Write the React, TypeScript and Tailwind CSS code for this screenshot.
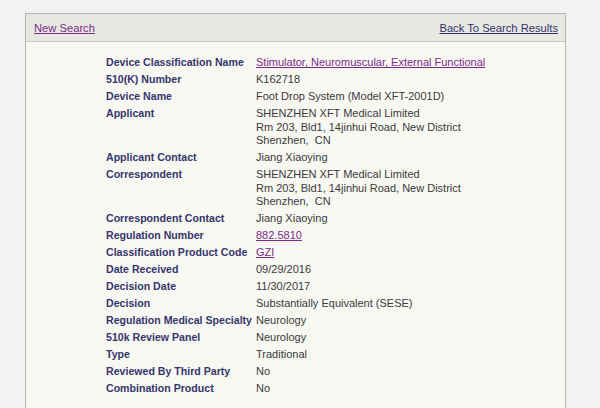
export default function App() {
    const rows: { label: string; value: string[]; link?: boolean }[] = [
        { label: 'Device Classification Name', value: ['Stimulator, Neuromuscular, External Functional'], link: true },
        { label: '510(K) Number', value: ['K162718'] },
        { label: 'Device Name', value: ['Foot Drop System (Model XFT-2001D)'] },
        { label: 'Applicant', value: ['SHENZHEN XFT Medical Limited', 'Rm 203, Bld1, 14jinhui Road, New District', 'Shenzhen,  CN'] },
        { label: 'Applicant Contact', value: ['Jiang Xiaoying'] },
        { label: 'Correspondent', value: ['SHENZHEN XFT Medical Limited', 'Rm 203, Bld1, 14jinhui Road, New District', 'Shenzhen,  CN'] },
        { label: 'Correspondent Contact', value: ['Jiang Xiaoying'] },
        { label: 'Regulation Number', value: ['882.5810'], link: true },
        { label: 'Classification Product Code', value: ['GZI'], link: true },
        { label: 'Date Received', value: ['09/29/2016'] },
        { label: 'Decision Date', value: ['11/30/2017'] },
        { label: 'Decision', value: ['Substantially Equivalent (SESE)'] },
        { label: 'Regulation Medical Specialty', value: ['Neurology'] },
        { label: '510k Review Panel', value: ['Neurology'] },
        { label: 'Type', value: ['Traditional'] },
        { label: 'Reviewed By Third Party', value: ['No'] },
        { label: 'Combination Product', value: ['No'] },
    ]

    return (
        <div className="w-[600px] h-[408px] overflow-hidden bg-[#f2f2f2] pt-[13px] pl-[25px] font-['Liberation_Sans',Arial,sans-serif]">
            <div className="w-[541px] h-[420px] border border-[#b4b4b4] bg-[#f8f8f3]">
                {/* Header bar */}
                <div className="h-[28px] bg-[#e8e8e3] border-b border-[#c8c8c4] flex items-center justify-between pl-[8px] pr-[7px] pt-[2px] text-[11.2px]">
                    <a className="text-[#7b2a88] underline">New Search</a>
                    <a className="text-[#33336b] underline">Back To Search Results</a>
                </div>

                {/* Detail table */}
                <div className="pl-[80px] pt-[12.5px]">
                    {rows.map((row, i) => (
                        <div key={i} className="flex text-[11px] leading-[13.5px] py-[1.75px]">
                            <div className="w-[150px] shrink-0 whitespace-nowrap font-bold text-[10.6px] text-[#35356b]">{row.label}</div>
                            <div className={row.link ? 'text-[#7b2a88] underline' : 'text-[#3a3a3a] whitespace-pre'}>
                                {row.value.map((line, j) => (
                                    <div key={j}>{line}</div>
                                ))}
                            </div>
                        </div>
                    ))}
                </div>
            </div>
        </div>
    )
}
